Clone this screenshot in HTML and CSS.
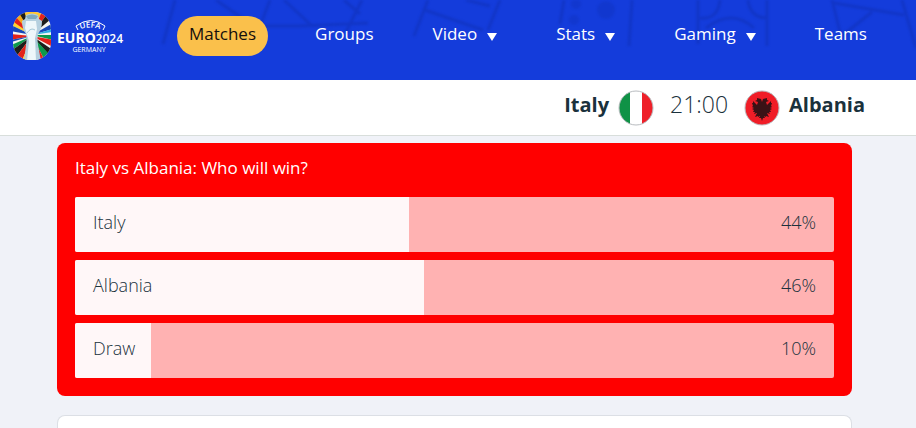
FILE: index.html
```html
<!DOCTYPE html>
<html lang="en">
<head>
    <meta charset="UTF-8">
    <meta name="viewport" content="width=device-width, initial-scale=1.0">
    <title>Italy vs Albania - UEFA EURO 2024</title>
    <link rel="stylesheet" href="styles.css">
</head>
<body>
    <header class="header">
        <svg class="pattern" width="916" height="80" viewBox="0 0 916 80" aria-hidden="true">
            <g fill="none" stroke="#1030b4" stroke-width="3" opacity="0.5">
                <path d="M175 0l-12 44M216 0l26 18M270 0l-10 26h40l68-3M284 0l28 26M344 0l16 14M362 0l-16 32"/>
                <path d="M428 0l-14 36M425 10l58 20M466 0l24 6M500 0l-12 30M564 0l-4 24M632 0l-3 46"/>
                <path d="M698 0v44M767 0v46M700 18q18 2 20-18M748 0q2 18 20 18M706 28q26-20 48 0"/>
                <path d="M832 0l8 32M834 3l70 12M902 0l14 48M872 12l-30 24"/>
            </g>
            <g fill="#1030b4" opacity="0.3">
                <circle cx="576" cy="4" r="5"/>
                <circle cx="606" cy="10" r="9"/>
                <circle cx="574" cy="20" r="5"/>
            </g>
        </svg>

        <a class="logo" href="#" aria-label="UEFA EURO 2024 Germany">
            <svg width="112" height="50" viewBox="0 0 112 50">
                <defs>
                    <clipPath id="emblem"><rect x="1" y="1" width="38" height="48" rx="17"/></clipPath>
                    <path id="arch" d="M64 20Q78 13 92 20"/>
                </defs>
                <g clip-path="url(#emblem)">
                    <rect width="40" height="50" fill="#f4f4f2"/>
                    <path fill="#ffc52e" d="M20 24V0h-9z"/>
                    <path fill="#1d1d1b" d="M20 24L12 0H5z"/>
                    <path fill="#f5a81c" d="M20 24L6 0 1 5z"/>
                    <path fill="#e2231a" d="M20 24L2 4l-4 6z"/>
                    <path fill="#ffd530" d="M20 24L-1 9v5z"/>
                    <path fill="#1848b8" d="M20 24L-1 14v6z"/>
                    <path fill="#e2231a" d="M20 25L-1 23v6z"/>
                    <path fill="#1848b8" d="M20 25L-1 29v2z"/>
                    <path fill="#0c9a4c" d="M20 25L-1 34v6z"/>
                    <path fill="#1d1d1b" d="M20 25L-1 40l5 6z"/>
                    <path fill="#e2231a" d="M20 25L4 46l6 4z"/>
                    <path fill="#ffd530" d="M20 25L10 50h6z"/>
                    <path fill="#ffc52e" d="M20 24V0h10z"/>
                    <path fill="#e2231a" d="M20 24L30 0l5 3z"/>
                    <path fill="#1d1d1b" d="M20 24L35 3l4 5z"/>
                    <path fill="#1848b8" d="M20 24L41 12v6z"/>
                    <path fill="#2dace3" d="M20 24l21-6v3z"/>
                    <path fill="#0c9a4c" d="M20 24h21v5z"/>
                    <path fill="#e2231a" d="M20 25l21 4v7z"/>
                    <path fill="#1d1d1b" d="M20 25l21 14-4 5z"/>
                    <path fill="#0c9a4c" d="M20 25l17 18-5 5z"/>
                    <path fill="#e2231a" d="M20 25l12 23-5 3z"/>
                    <path fill="#b5d0df" d="M14 4q6-3 12 0l1 4 3 2q0 8-4 13-1 6 0 11l3 16H12l2-16q1-5 0-11-4-5-4-13l3-2z"/>
                    <path fill="#eef7fa" d="M14 10h10l1 8-2 9 1 23h-9l2-20-4-13z"/>
                    <path fill="#7da9bf" d="M14 5q6-3 12 0l-2 3h-8z"/>
                    <path fill="none" stroke="#a3c5d4" d="M15 22q4-6 8-3M24 27l1 10"/>
                </g>
                <path fill="none" stroke="#fff" d="M91 19l2-4Q79 4 64 15l2 4"/>
                <text class="logo-uefa"><textPath href="#arch" startOffset="50%" text-anchor="middle">UEFA</textPath></text>
                <text class="logo-euro" x="45" y="32">EURO</text>
                <text class="logo-year" x="111" y="32" text-anchor="end">2024</text>
                <text class="logo-host" x="77" y="41" text-anchor="middle">GERMANY</text>
            </svg>
        </a>

        <nav class="nav">
            <a class="nav-item active" href="#">Matches</a>
            <a class="nav-item" href="#">Groups</a>
            <a class="nav-item has-menu" href="#">Video</a>
            <a class="nav-item has-menu" href="#">Stats</a>
            <a class="nav-item has-menu" href="#">Gaming</a>
            <a class="nav-item" href="#">Teams</a>
        </nav>
    </header>

    <div class="match">
        <strong>Italy</strong>
        <svg class="flag" width="36" height="36" viewBox="0 0 36 36" aria-hidden="true">
            <clipPath id="round"><circle cx="18" cy="18" r="17"/></clipPath>
            <g clip-path="url(#round)">
                <rect width="12" height="36" fill="#0f9246"/>
                <rect x="12" width="12" height="36" fill="#fff"/>
                <rect x="24" width="12" height="36" fill="#ee2029"/>
            </g>
            <circle cx="18" cy="18" r="17" fill="none" stroke="#b9bcc0"/>
        </svg>
        <span class="time">21:00</span>
        <svg class="flag" width="36" height="36" viewBox="0 0 36 36" aria-hidden="true">
            <circle cx="18" cy="18" r="17" fill="#f01d27" stroke="#b9bcc0"/>
            <path fill="#3a1216" d="M18 12l-1-3-4-1 0 2-2 1 3 1-1 3-4-4 0 2-1 0 1 3-1 1 2 1-2 1 2 1-1 2 2 0-1 2 3-1-2 4 3-1 0 1 2-1-1 2 2 0 1 3 1-3 2 0-1-2 2 1 0-1 3 1-2-4 3 1-1-2 2 0-1-2 2-1-2-1 2-1-1-1 1-3-1 0 0-2-4 4-1-3 3-1-2-1 0-2-4 1z"/>
        </svg>
        <strong>Albania</strong>
    </div>

    <main class="content">
        <section class="poll">
            <h1>Italy vs Albania: Who will win?</h1>
            <ul class="options">
                <li class="option">
                    <div class="fill" style="width: 44%"></div>
                    <span class="name">Italy</span>
                    <span class="percent">44%</span>
                </li>
                <li class="option">
                    <div class="fill" style="width: 46%"></div>
                    <span class="name">Albania</span>
                    <span class="percent">46%</span>
                </li>
                <li class="option">
                    <div class="fill" style="width: 10%"></div>
                    <span class="name">Draw</span>
                    <span class="percent">10%</span>
                </li>
            </ul>
        </section>

        <section class="card"></section>
    </main>
</body>
</html>
```
FILE: styles.css
```css
* {
    box-sizing: border-box;
}
body {
    display: flex;
    flex-direction: column;
    min-height: 100vh;
    margin: 0;
    font-family: 'Open Sans', 'Noto Sans', sans-serif;
    font-size: 17px;
    background-color: #f0f2f8;
    color: #1a313c;
}
.header {
    position: relative;
    display: flex;
    align-items: flex-start;
    height: 80px;
    padding: 11px 37px 0 12px;
    background-color: #143cdb;
    overflow: hidden;
}
.pattern {
    position: absolute;
    top: 0;
    left: 0;
    filter: blur(1px);
}
.logo {
    position: relative;
    flex: none;
    width: 165px;
}
.logo svg {
    display: block;
}
.logo text {
    fill: #fff;
    font-family: 'Open Sans', sans-serif;
}
.logo .logo-uefa {
    font-size: 8px;
    font-weight: 600;
}
.logo .logo-euro {
    font-size: 14px;
    font-weight: 700;
}
.logo .logo-year {
    font-size: 12px;
    font-weight: 600;
}
.logo .logo-host {
    font-size: 7px;
}
.nav {
    position: relative;
    display: flex;
    flex: 1;
    justify-content: space-between;
    padding-top: 5px;
}
.nav-item {
    display: flex;
    align-items: center;
    height: 40px;
    padding: 0 12px 5px;
    border-radius: 20px;
    color: #fff;
    font-weight: 500;
    text-decoration: none;
}
.nav-item.active {
    background-color: #fac04b;
    color: #150f0c;
}
.has-menu::after {
    content: "";
    margin: 6px 0 0 10px;
    border: 5px solid transparent;
    border-top: 8px solid #fff;
    border-bottom: 0;
}
.match {
    display: flex;
    align-items: center;
    justify-content: flex-end;
    height: 56px;
    padding: 0 51px 0 0;
    border-bottom: 1px solid #d8dedb;
    background-color: #fff;
    font-size: 20px;
}
.match strong {
    padding-bottom: 6px;
    font-weight: 700;
}
.flag {
    margin: 0 9px;
}
.time {
    margin: 0 7px;
    padding-bottom: 7px;
    font-size: 23px;
    font-weight: 300;
}
.content {
    display: flex;
    flex: 1;
    flex-direction: column;
    padding: 7px 64px 0 57px;
}
.poll {
    padding: 13px 18px 17px;
    border-radius: 8px;
    background-color: #ff0000;
}
.poll h1 {
    margin: 0 0 18px;
    color: #fff;
    font-size: 17px;
    font-weight: 500;
    line-height: 23px;
}
.options {
    display: grid;
    gap: 8px;
    margin: 0;
    padding: 0 0 1px;
    list-style: none;
}
.option {
    position: relative;
    display: flex;
    align-items: center;
    justify-content: space-between;
    height: 55px;
    padding: 0 18px 5px;
    border-radius: 2px;
    background-color: #ffb2b2;
    font-size: 18px;
    font-weight: 300;
    overflow: hidden;
}
.fill {
    position: absolute;
    top: 0;
    bottom: 0;
    left: 0;
    background-color: #fff7f8;
}
.name,
.percent {
    position: relative;
}
.card {
    flex: 1;
    margin-top: 19px;
    border: 1px solid #dcdfe5;
    border-bottom: 0;
    border-radius: 8px 8px 0 0;
    background-color: #fff;
}
```
